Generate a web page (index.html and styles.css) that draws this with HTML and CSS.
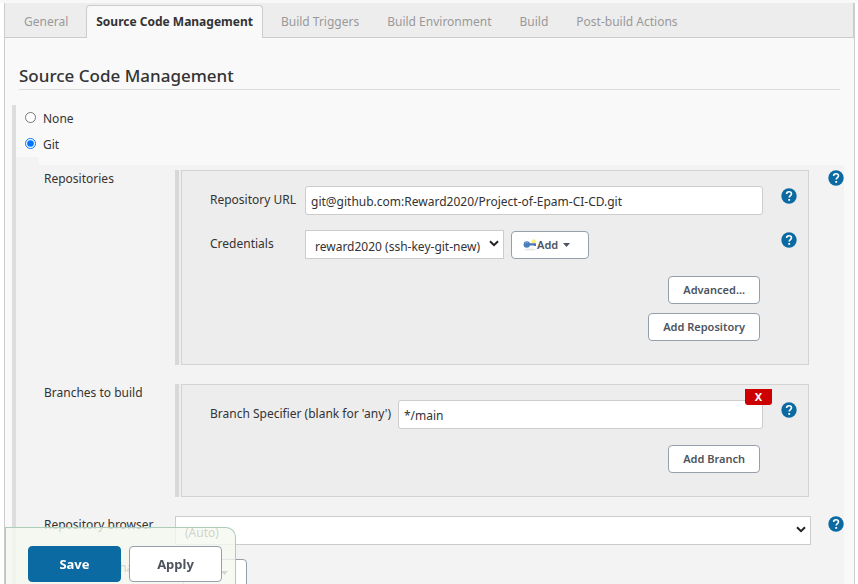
FILE: index.html
```html
<!DOCTYPE html>
<html lang="en">
<head>
<meta charset="utf-8">
<title>Source Code Management</title>
<link rel="stylesheet" href="styles.css">
</head>
<body>
<svg class="defs" aria-hidden="true">
  <symbol id="help" viewBox="0 0 16 16">
    <circle cx="8" cy="8" r="7.7" fill="#0b6aa2"/>
    <path d="M5.6 6.1C5.6 4.5 6.6 3.7 8 3.7s2.5.8 2.5 2.1c0 1.7-2.3 1.8-2.3 3.8" fill="none" stroke="#fff" stroke-width="1.6"/>
    <rect x="7.3" y="11" width="1.8" height="1.8" fill="#fff"/>
  </symbol>
</svg>
<main class="page">
  <nav class="tabs">
    <a class="tab" href="#general">General</a>
    <a class="tab active" href="#scm">Source Code Management</a>
    <a class="tab" href="#triggers">Build Triggers</a>
    <a class="tab" href="#environment">Build Environment</a>
    <a class="tab" href="#build">Build</a>
    <a class="tab" href="#post">Post-build Actions</a>
  </nav>
  <form>
    <h1 class="title" id="scm">Source Code Management</h1>
    <div class="section">
      <label class="choice"><input type="radio" name="scm">None</label>
      <label class="choice"><input type="radio" name="scm" checked>Git</label>
      <div class="details">
        <div class="row">
          <span class="row-label">Repositories</span>
          <div class="panel">
            <div class="field">
              <label for="url">Repository URL</label>
              <div class="removable">
                <input class="text" id="url" type="text" value="git@github.com:Reward2020/Project-of-Epam-CI-CD.git">
              </div>
              <button class="help" type="button" aria-label="Help"><svg><use href="#help"/></svg></button>
            </div>
            <div class="field">
              <label for="cred">Credentials</label>
              <div class="group">
                <div class="drop">
                  <select id="cred"><option>reward2020 (ssh-key-git-new)</option></select>
                  <svg class="chevron" viewBox="0 0 10 7"><path d="M1 1.2l4 4 4-4" fill="none" stroke="#222" stroke-width="2"/></svg>
                </div>
                <button class="btn add" type="button">
                  <svg class="key" viewBox="0 0 14 12"><ellipse cx="7" cy="10.6" rx="5.5" ry="1" fill="#e6e6e6"/><circle cx="10.7" cy="2.4" r="2.2" fill="#f7ee7c"/><path d="M5 4.2h8v2.8h-2v-.6H5z" fill="#4775b5"/><circle cx="3.8" cy="5.5" r="3.2" fill="#4b7dbd"/><path d="M2 4.4a2.4 2.4 0 0 1 3-1" fill="none" stroke="#86abda"/></svg>Add<svg class="caret" viewBox="0 0 7 4"><path d="M0 0h7L3.5 4z" fill="#4d545d"/></svg>
                </button>
              </div>
              <button class="help" type="button" aria-label="Help"><svg><use href="#help"/></svg></button>
            </div>
            <div class="actions">
              <button class="btn" type="button">Advanced...</button>
              <button class="btn" type="button">Add Repository</button>
            </div>
          </div>
          <button class="help" type="button" aria-label="Help"><svg><use href="#help"/></svg></button>
        </div>
        <div class="row">
          <span class="row-label">Branches to build</span>
          <div class="panel">
            <div class="field wide">
              <label for="branch">Branch Specifier (blank for 'any')</label>
              <div class="removable">
                <input class="text" id="branch" type="text" value="*/main">
                <button class="remove" type="button">X</button>
              </div>
              <button class="help" type="button" aria-label="Help"><svg><use href="#help"/></svg></button>
            </div>
            <div class="actions">
              <button class="btn" type="button">Add Branch</button>
            </div>
          </div>
        </div>
        <div class="row browser">
          <label class="row-label" for="browser">Repository browser</label>
          <div class="drop">
            <select id="browser"><option>(Auto)</option></select>
            <svg class="chevron" viewBox="0 0 10 7"><path d="M1 1.2l4 4 4-4" fill="none" stroke="#222" stroke-width="2"/></svg>
          </div>
          <button class="help" type="button" aria-label="Help"><svg><use href="#help"/></svg></button>
        </div>
        <div class="row">
          <span class="row-label">Additional Behaviours</span>
          <div class="extra">
            <button class="btn add" type="button">Add<svg class="caret" viewBox="0 0 7 4"><path d="M0 0h7L3.5 4z" fill="#4d545d"/></svg></button>
          </div>
        </div>
      </div>
    </div>
    <div class="savebar">
      <button class="big primary" type="submit">Save</button>
      <button class="big" type="button">Apply</button>
    </div>
  </form>
</main>
</body>
</html>
```
FILE: styles.css
```css
* { box-sizing: border-box; }
html { height: 100%; }
body {
  margin: 0;
  height: 100%;
  overflow: hidden;
  background: #fff;
  border-top: 3px solid #f8f8f8;
  color: #333;
  font: 12px/18px "Noto Sans", sans-serif;
}
button, input, select { font: inherit; color: inherit; margin: 0; }
.defs { display: none; }
.page {
  margin: 0 3px 0 4px;
  border: 1px solid #ccc;
  border-width: 0 1px;
  background: #f9f9f9;
}
.tabs {
  display: flex;
  align-items: flex-end;
  gap: 8px;
  height: 35px;
  padding-left: 9px;
  background: #ededed;
  border-bottom: 1px solid #ccc;
  border-right: 1px solid #ccc;
}
.tab {
  height: 33px;
  margin-bottom: -1px;
  padding: 7px 9px;
  border: 1px solid transparent;
  border-bottom: 0;
  border-radius: 4px 4px 0 0;
  color: #999;
  text-decoration: none;
  white-space: nowrap;
}
.tab.active {
  background: #f9f9f9;
  border-color: #ccc;
  color: #333;
  font-weight: 700;
}
.title {
  margin: 26px 14px 15px;
  padding-bottom: 1px;
  border-bottom: 1px solid #ddd;
  font-size: 17px;
  line-height: 24px;
  font-weight: 500;
}
.section {
  margin: 0 10px 0 7px;
  border-left: 4px solid #ddd;
}
.choice {
  display: flex;
  align-items: center;
  gap: 7px;
  height: 26px;
  padding: 2px 0 0 9px;
}
.choice input { width: 11px; height: 11px; margin-bottom: 4px; }
.details {
  padding: 13px 0 40px 28px;
  background:
    linear-gradient(#f3f3f3, #f3f3f3) 0 0 / 23px 8px no-repeat,
    linear-gradient(#f3f3f3, #f3f3f3) 0 8px no-repeat;
}
.row {
  display: grid;
  grid-template-columns: 131px 1fr 16px;
  align-items: start;
  margin-bottom: 19px;
}
.row-label { white-space: nowrap; }
.panel {
  margin: 0 19px 0 6px;
  padding: 15px 11px 23px 28px;
  background: #ededed;
  border: 1px solid #d3d3d3;
  box-shadow: -2px 0 0 #eee, -6px 0 0 #d8d8d8;
}
.field {
  display: grid;
  grid-template-columns: 95px 1fr 16px;
  align-items: start;
  margin-bottom: 15px;
}
.field.wide { grid-template-columns: 188px 1fr 16px; margin-bottom: 0; }
.wide + .actions { margin-top: 16px; }
.field > label { padding-top: 5px; white-space: nowrap; }
.field .help { margin-top: 2px; }
.removable, .group { margin-right: 18px; }
.text {
  display: block;
  width: 100%;
  height: 29px;
  padding: 3px 5px 1px;
  background: #fff;
  border: 1px solid #ccc;
  border-radius: 3px;
}
.help {
  width: 16px;
  height: 16px;
  padding: 0;
  border: 0;
  background: none;
}
.help svg { display: block; width: 16px; height: 16px; }
.group { display: flex; gap: 7px; align-items: center; }
.drop { position: relative; }
.drop select {
  appearance: none;
  display: block;
  width: 100%;
  height: 29px;
  padding: 4px 22px 0 9px;
  background: #fff;
  border: 1px solid #ccc;
  border-radius: 0;
}
.drop .chevron {
  position: absolute;
  right: 5px;
  top: 10px;
  width: 10px;
  height: 7px;
  pointer-events: none;
}
.btn {
  height: 28px;
  padding: 0 14px;
  background: #fff;
  border: 1px solid #96a0ab;
  border-radius: 4px;
  color: #4d545d;
  font-size: 11px;
  font-weight: 600;
}
.add { display: flex; align-items: center; padding: 0 18px 0 11px; }
.key { width: 14px; height: 12px; }
.caret { width: 7px; height: 4px; margin-left: 5px; }
.actions {
  display: flex;
  flex-direction: column;
  align-items: flex-end;
  gap: 9px;
  margin: 17px 37px 0 0;
}
.removable { position: relative; }
.remove {
  position: absolute;
  right: -9px;
  top: -11px;
  width: 27px;
  height: 16px;
  padding: 0;
  background: #c00;
  border: 0;
  border-radius: 0 0 3px 3px;
  color: #fff;
  font-size: 11px;
  line-height: 16px;
  font-weight: 700;
}
.browser { margin-bottom: 14px; }
.browser .drop { margin-right: 17px; }
.extra { padding-left: 8px; }
.savebar {
  position: fixed;
  left: 5px;
  bottom: 0;
  display: flex;
  gap: 8px;
  padding: 18px 13px 2px 22px;
  background: rgba(245, 249, 239, .8);
  border: 1px solid #a9cdb9;
  border-width: 1px 1px 0 1px;
  border-radius: 0 10px 0 0;
}
.big {
  width: 93px;
  height: 36px;
  padding: 0;
  background: #fff;
  border: 1px solid #96a0ab;
  border-radius: 4px;
  color: #4d545d;
  font-size: 13px;
  font-weight: 700;
}
.big.primary { background: #0b6aa2; border-color: #0b6aa2; color: #fff; }
```
